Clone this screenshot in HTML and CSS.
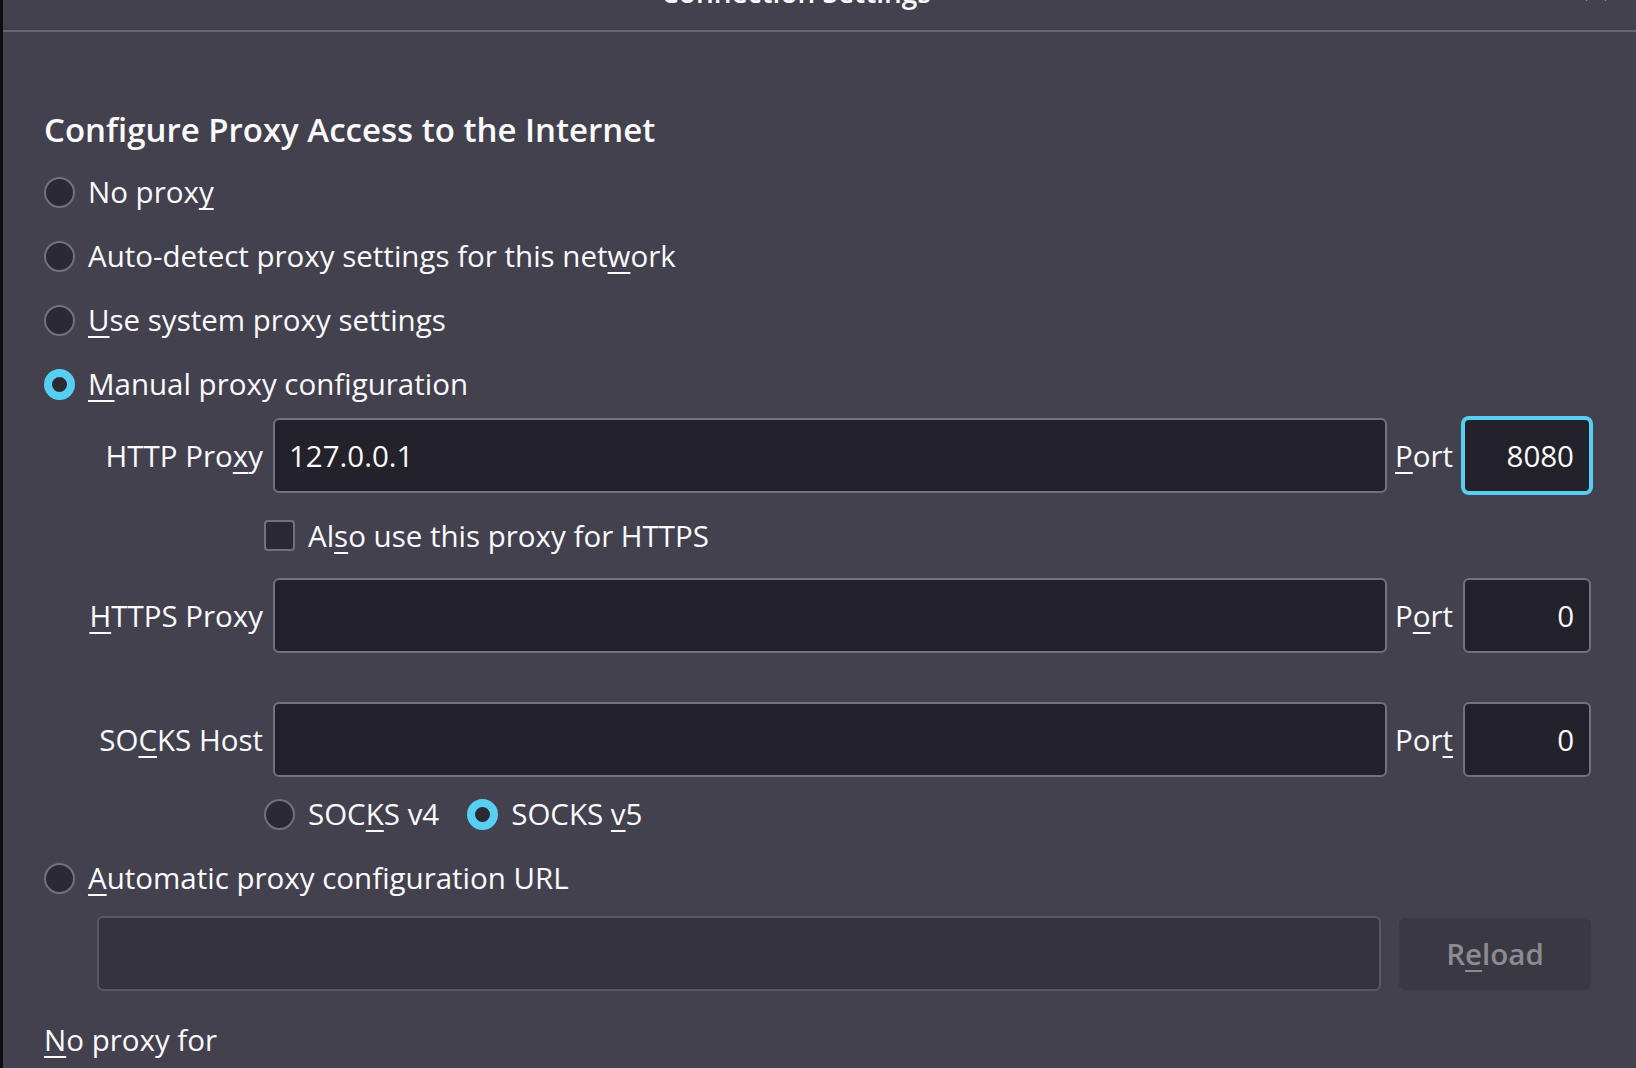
FILE: index.html
```html
<!DOCTYPE html>
<html lang="en">
<head>
<meta charset="utf-8">
<title>Connection Settings</title>
<link rel="stylesheet" href="styles.css">
</head>
<body>
<div class="window">
  <div class="dialog">
    <header class="titlebar">
      <div class="title">Connection Settings</div>
      <div class="close">
        <svg width="24" height="24" viewBox="0 0 24 24"><path d="M2 2 L22 22 M22 2 L2 22" stroke="#fbfbfe" stroke-width="2" fill="none"/></svg>
      </div>
    </header>
    <main class="content">
      <h2 class="heading">Configure Proxy Access to the Internet</h2>

      <div class="radio-row"><span class="radio"></span><span>No prox<u>y</u></span></div>
      <div class="radio-row"><span class="radio"></span><span>Auto-detect proxy settings for this net<u>w</u>ork</span></div>
      <div class="radio-row"><span class="radio"></span><span><u>U</u>se system proxy settings</span></div>
      <div class="radio-row"><span class="radio checked"></span><span><u>M</u>anual proxy configuration</span></div>

      <div class="proxy-grid">
        <div class="plabel">HTTP Pro<u>x</u>y</div>
        <div class="field">127.0.0.1</div>
        <div class="portlabel"><u>P</u>ort</div>
        <div class="field port focused">8080</div>

        <div class="cell"></div>
        <div class="check-row"><span class="checkbox"></span><span>Al<u>s</u>o use this proxy for HTTPS</span></div>

        <div class="plabel"><u>H</u>TTPS Proxy</div>
        <div class="field"></div>
        <div class="portlabel">P<u>o</u>rt</div>
        <div class="field port">0</div>

        <div class="spacer"></div>

        <div class="plabel">SO<u>C</u>KS Host</div>
        <div class="field"></div>
        <div class="portlabel">Por<u>t</u></div>
        <div class="field port">0</div>

        <div class="cell"></div>
        <div class="socks-row">
          <div class="opt"><span class="radio"></span><span>SOC<u>K</u>S v4</span></div>
          <div class="opt"><span class="radio checked"></span><span>SOCKS <u>v</u>5</span></div>
        </div>
      </div>

      <div class="radio-row"><span class="radio"></span><span><u>A</u>utomatic proxy configuration URL</span></div>

      <div class="url-row">
        <div class="field disabled"></div>
        <div class="button">R<u>e</u>load</div>
      </div>

      <div class="noproxy"><u>N</u>o proxy for</div>
    </main>
  </div>
</div>
</body>
</html>
```

FILE: styles.css
```css
* {
  box-sizing: border-box;
}

html,
body {
  margin: 0;
  height: 100%;
}

body {
  background: #0d0d10;
  overflow: hidden;
  font-family: "Open Sans", "Noto Sans", sans-serif;
  font-size: 29.5px;
  line-height: 40px;
  color: #fbfbfe;
}

u {
  text-decoration-thickness: 2px;
  text-underline-offset: 5px;
  text-decoration-skip-ink: none;
}

.window {
  height: 100%;
  padding-left: 3px;
}

.dialog {
  height: 100%;
  background: #42414d;
}

.titlebar {
  height: 32px;
  border-bottom: 2px solid #67666e;
  display: flex;
  align-items: flex-end;
}

.title {
  flex: 1;
  text-align: center;
  font-size: 28px;
  font-weight: 600;
  line-height: 38px;
  margin-bottom: 19px;
  white-space: nowrap;
}

.close {
  width: 47px;
  align-self: stretch;
  display: flex;
  align-items: flex-end;
}

.close svg {
  display: block;
  margin-left: -5px;
  margin-bottom: 28px;
}

.content {
  padding: 0 45px 0 41px;
}

.heading {
  margin: 75px 0 8px;
  font-size: 33px;
  font-weight: 600;
  line-height: 45px;
  white-space: nowrap;
}

.radio-row {
  display: flex;
  align-items: center;
  gap: 13px;
  height: 64px;
  white-space: nowrap;
}

.radio {
  flex: none;
  width: 31px;
  height: 31px;
  border-radius: 50%;
  border: 2px solid #73727a;
  background: #2b2a33;
}

.radio.checked {
  border: 8px solid #57cff2;
  background: #2b2a33;
}

.proxy-grid {
  margin-top: 2px;
  display: grid;
  grid-template-columns: 229px 1fr 76px 128px;
  grid-template-rows: 75px 85px 75px 49px 75px 69px;
  align-items: center;
}

.plabel {
  text-align: right;
  padding-right: 10px;
  white-space: nowrap;
}

.portlabel {
  padding-left: 8px;
  white-space: nowrap;
}

.field {
  height: 75px;
  border: 2px solid #73727a;
  border-radius: 6px;
  background: #23222b;
  padding: 0 14px;
  display: flex;
  align-items: center;
  white-space: nowrap;
}

.port {
  justify-content: flex-end;
  padding-right: 15px;
}

.port.focused {
  border-color: #57cff2;
  box-shadow: 0 0 0 2px #57cff2;
}

.spacer {
  grid-column: 1 / -1;
}

.check-row {
  grid-column: 2 / -1;
  margin-left: -9px;
  display: flex;
  align-items: center;
  gap: 13px;
  white-space: nowrap;
}

.checkbox {
  flex: none;
  width: 31px;
  height: 31px;
  border: 2px solid #73727a;
  border-radius: 4px;
  background: #2b2a33;
}

.socks-row {
  grid-column: 2 / -1;
  align-self: end;
  margin-left: -9px;
  height: 64px;
  display: flex;
  align-items: center;
  gap: 28px;
  white-space: nowrap;
}

.opt {
  display: flex;
  align-items: center;
  gap: 13px;
}

.url-row {
  margin-top: 6px;
  padding-left: 53px;
  display: flex;
  align-items: center;
  gap: 18px;
}

.field.disabled {
  flex: 1;
  background: #35343e;
  border-color: #5a5961;
}

.button {
  flex: none;
  width: 192px;
  height: 72px;
  border-radius: 6px;
  background: #3a3942;
  color: #8c8b94;
  font-weight: 600;
  display: flex;
  align-items: center;
  justify-content: center;
}

.noproxy {
  margin-top: 29px;
  white-space: nowrap;
}
```
